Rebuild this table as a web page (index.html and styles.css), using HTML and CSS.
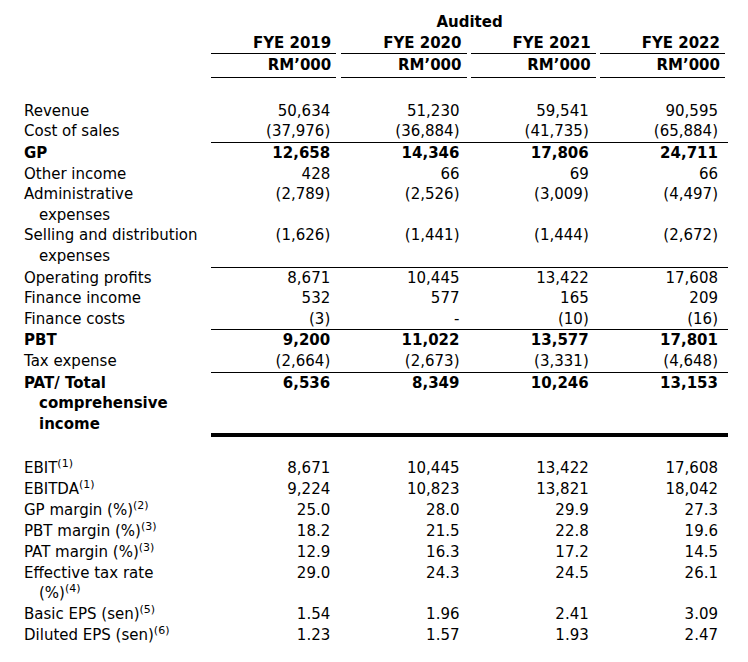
FILE: index.html
```html
<!DOCTYPE html>
<html>
<head>
<meta charset="utf-8">
<link rel="stylesheet" href="styles.css">
</head>
<body>
<div class="sheet">
  <div class="row head-top">
    <div class="audited">Audited</div>
  </div>
  <div class="row head">
    <div class="hcell first">FYE 2019</div>
    <div class="hcell">FYE 2020</div>
    <div class="hcell">FYE 2021</div>
    <div class="hcell">FYE 2022</div>
  </div>
  <div class="row head unit">
    <div class="hcell first">RM’000</div>
    <div class="hcell">RM’000</div>
    <div class="hcell">RM’000</div>
    <div class="hcell">RM’000</div>
  </div>

  <div class="body">
    <div class="row"><div class="label">Revenue</div><div class="num">50,634</div><div class="num">51,230</div><div class="num">59,541</div><div class="num">90,595</div></div>
    <div class="row"><div class="label">Cost of sales</div><div class="num">(37,976)</div><div class="num">(36,884)</div><div class="num">(41,735)</div><div class="num">(65,884)</div></div>
    <div class="rule"></div>
    <div class="row bold"><div class="label">GP</div><div class="num">12,658</div><div class="num">14,346</div><div class="num">17,806</div><div class="num">24,711</div></div>
    <div class="row"><div class="label">Other income</div><div class="num">428</div><div class="num">66</div><div class="num">69</div><div class="num">66</div></div>
    <div class="row"><div class="label">Administrative<br>expenses</div><div class="num">(2,789)</div><div class="num">(2,526)</div><div class="num">(3,009)</div><div class="num">(4,497)</div></div>
    <div class="row"><div class="label">Selling and distribution<br>expenses</div><div class="num">(1,626)</div><div class="num">(1,441)</div><div class="num">(1,444)</div><div class="num">(2,672)</div></div>
    <div class="rule"></div>
    <div class="row"><div class="label">Operating profits</div><div class="num">8,671</div><div class="num">10,445</div><div class="num">13,422</div><div class="num">17,608</div></div>
    <div class="row"><div class="label">Finance income</div><div class="num">532</div><div class="num">577</div><div class="num">165</div><div class="num">209</div></div>
    <div class="row"><div class="label">Finance costs</div><div class="num">(3)</div><div class="num">-</div><div class="num">(10)</div><div class="num">(16)</div></div>
    <div class="rule"></div>
    <div class="row bold"><div class="label">PBT</div><div class="num">9,200</div><div class="num">11,022</div><div class="num">13,577</div><div class="num">17,801</div></div>
    <div class="row"><div class="label">Tax expense</div><div class="num">(2,664)</div><div class="num">(2,673)</div><div class="num">(3,331)</div><div class="num">(4,648)</div></div>
    <div class="rule"></div>
    <div class="row bold"><div class="label">PAT/ Total<br>comprehensive<br>income</div><div class="num">6,536</div><div class="num">8,349</div><div class="num">10,246</div><div class="num">13,153</div></div>
    <div class="rule thick"></div>

    <div class="ratios">
      <div class="row"><div class="label">EBIT<sup>(1)</sup></div><div class="num">8,671</div><div class="num">10,445</div><div class="num">13,422</div><div class="num">17,608</div></div>
      <div class="row"><div class="label">EBITDA<sup>(1)</sup></div><div class="num">9,224</div><div class="num">10,823</div><div class="num">13,821</div><div class="num">18,042</div></div>
      <div class="row"><div class="label">GP margin (%)<sup>(2)</sup></div><div class="num">25.0</div><div class="num">28.0</div><div class="num">29.9</div><div class="num">27.3</div></div>
      <div class="row"><div class="label">PBT margin (%)<sup>(3)</sup></div><div class="num">18.2</div><div class="num">21.5</div><div class="num">22.8</div><div class="num">19.6</div></div>
      <div class="row"><div class="label">PAT margin (%)<sup>(3)</sup></div><div class="num">12.9</div><div class="num">16.3</div><div class="num">17.2</div><div class="num">14.5</div></div>
      <div class="row"><div class="label">Effective tax rate<br>(%)<sup>(4)</sup></div><div class="num">29.0</div><div class="num">24.3</div><div class="num">24.5</div><div class="num">26.1</div></div>
      <div class="row"><div class="label">Basic EPS (sen)<sup>(5)</sup></div><div class="num">1.54</div><div class="num">1.96</div><div class="num">2.41</div><div class="num">3.09</div></div>
      <div class="row"><div class="label">Diluted EPS (sen)<sup>(6)</sup></div><div class="num">1.23</div><div class="num">1.57</div><div class="num">1.93</div><div class="num">2.47</div></div>
    </div>
  </div>
</div>
</body>
</html>
```
FILE: styles.css
```css
html, body {
  margin: 0;
  padding: 0;
  background: #ffffff;
}

body {
  font-family: "DejaVu Sans", Verdana, sans-serif;
  font-size: 15px;
  color: #000000;
}

.sheet {
  width: 704px;
  padding: 12px 0 0 24px;
}

.row {
  display: grid;
  grid-template-columns: 187px repeat(4, 129.25px);
  line-height: 20.6px;
}

.head-top .audited {
  grid-column: 2 / -1;
  text-align: center;
  font-weight: bold;
}

.head .hcell {
  font-weight: bold;
  text-align: right;
  padding-right: 5px;
  margin: 0 3px 0 1px;
  border-bottom: 1px solid #000000;
}

.head .hcell.first {
  grid-column: 2;
  margin-left: 0;
  margin-right: 4px;
}

.head.unit .hcell {
  padding-top: 1px;
  padding-bottom: 1px;
}

.body {
  margin-top: 23px;
}

.label {
  padding-left: 15px;
  text-indent: -15px;
}

.num {
  text-align: right;
  padding-right: 10px;
}

.bold {
  font-weight: bold;
}

.rule {
  margin-left: 187px;
  height: 1px;
  background: #000000;
}

.rule.thick {
  height: 4px;
  margin-top: -1px;
}

.ratios {
  margin-top: 21px;
}

.ratios .row {
  line-height: 20.85px;
}

sup {
  font-size: 11px;
  line-height: 0;
  vertical-align: 6px;
}
```
